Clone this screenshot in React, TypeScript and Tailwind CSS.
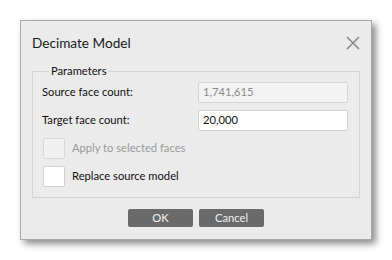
export default function App() {
  return (
    <div className="w-[392px] h-[260px] bg-white p-[20px] font-['Lato',sans-serif] text-[11.2px] text-[#111]">
      <div className="w-[352px] h-[220px] bg-[#ebebeb] border border-[#a8a8a8] shadow-[4px_4px_7px_rgba(0,0,0,0.45)] flex flex-col">
        {/* Header */}
        <div className="h-[42px] flex items-start justify-between pl-[11px] pr-[11px] pt-[13px]">
          <span className="text-[13.6px] leading-[18px] text-[#1a1a1a]">Decimate Model</span>
          <svg width="14" height="14" viewBox="0 0 14 14" className="mt-[2px]">
            <path d="M1 1 L13 13 M13 1 L1 13" stroke="#8a8a8a" strokeWidth="1.6" />
          </svg>
        </div>

        {/* Parameters */}
        <fieldset className="mx-[11px] border border-[#d3d3d3] pl-[9px] pr-[11px] pt-[3px] pb-[10px] flex flex-col gap-[7px]">
          <legend className="ml-[7px] px-[2px] leading-[16px]">Parameters</legend>
          <div className="flex items-center justify-between h-[21px]">
            <span>Source face count:</span>
            <div className="w-[150px] h-[21px] bg-[#f3f3f3] border border-[#d6d6d6] rounded-[2px] px-[4px] flex items-center text-[#8a8a8a]">
              1,741,615
            </div>
          </div>
          <div className="flex items-center justify-between h-[21px]">
            <span>Target face count:</span>
            <div className="w-[150px] h-[21px] bg-white border border-[#d0d0d0] rounded-[2px] px-[4px] flex items-center text-[#111]">
              20,000
            </div>
          </div>
          <div className="flex items-center gap-[7px] h-[21px] pl-[1px]">
            <div className="w-[22px] h-[21px] bg-[#f0f0f0] border border-[#d8d8d8] rounded-[2px]" />
            <span className="text-[#9a9a9a]">Apply to selected faces</span>
          </div>
          <div className="flex items-center gap-[7px] h-[21px] pl-[1px]">
            <div className="w-[22px] h-[21px] bg-white border border-[#d0d0d0] rounded-[2px]" />
            <span>Replace source model</span>
          </div>
        </fieldset>

        {/* Buttons */}
        <div className="flex justify-center gap-[6px] mt-[11px]">
          <button className="w-[65px] h-[18px] bg-[#6a6a6a] rounded-[2px] text-[#f0f0f0] text-[11.2px] leading-[18px]">OK</button>
          <button className="w-[65px] h-[18px] bg-[#6a6a6a] rounded-[2px] text-[#f0f0f0] text-[11.2px] leading-[18px]">Cancel</button>
        </div>
      </div>
    </div>
  );
}
